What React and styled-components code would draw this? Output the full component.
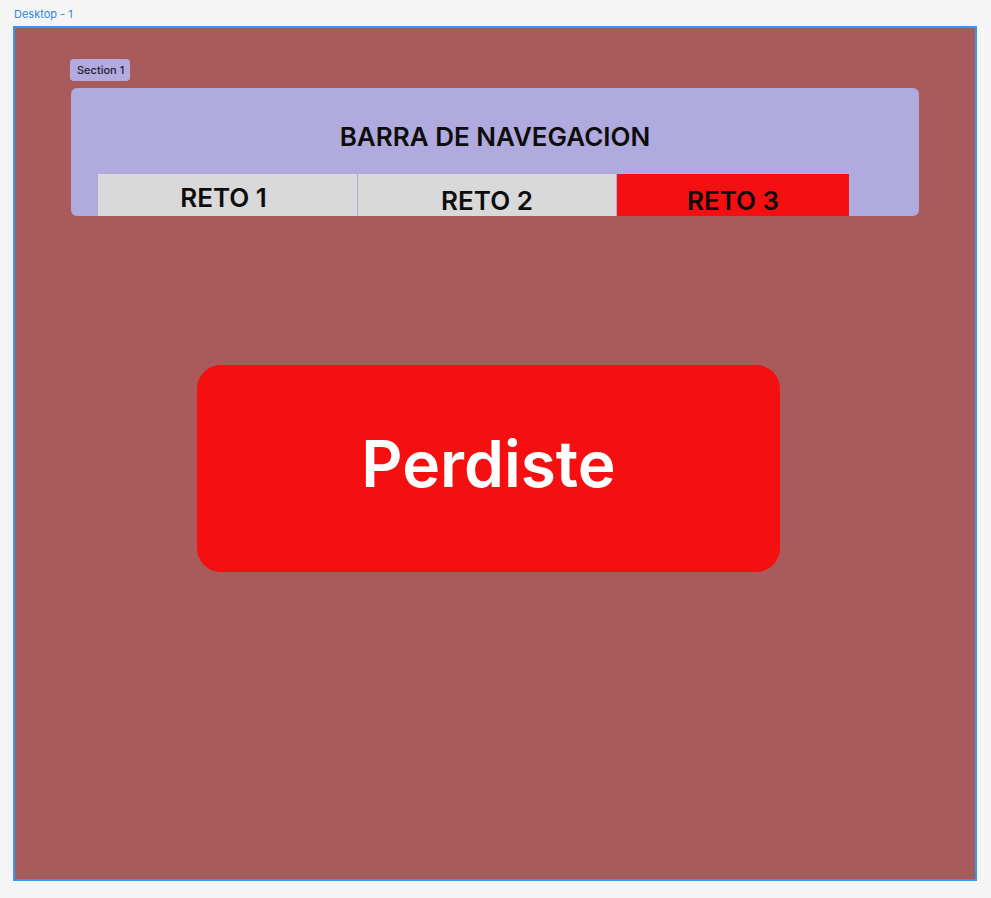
import styled, { createGlobalStyle } from 'styled-components';

const GlobalStyle = createGlobalStyle`
  html, body {
    margin: 0;
    padding: 0;
    background: #f5f5f5;
    font-family: Inter, "Liberation Sans", sans-serif;
  }
  * {
    box-sizing: border-box;
  }
`;

// el primer reto queda un poco mas arriba y a la izquierda en el diseño
const tabs = [
  { label: 'RETO 1', width: 259, active: false, raised: true },
  { label: 'RETO 2', width: 258, active: false },
  { label: 'RETO 3', width: 232, active: true },
];

export default function App() {
  return (
    <Page>
      <GlobalStyle />
      <FrameLabel>Desktop - 1</FrameLabel>
      <Frame>
        <SectionTag>Section 1</SectionTag>
        <NavPanel>
          <NavTitle>BARRA DE NAVEGACION</NavTitle>
          <TabRow>
            {tabs.map((tab) => (
              <Tab key={tab.label} $width={tab.width} $active={tab.active} $raised={tab.raised}>
                {tab.label}
              </Tab>
            ))}
          </TabRow>
        </NavPanel>
        <ResultCard>Perdiste</ResultCard>
      </Frame>
    </Page>
  );
}

const Page = styled.div`
  width: 991px;
  height: 898px;
  padding: 7px 0 0 13px;
  background: #f5f5f5;
`;

const FrameLabel = styled.div`
  font-size: 11px;
  line-height: 14px;
  color: #2f86de;
  padding-left: 1px;
  margin-bottom: 5px;
`;

const Frame = styled.div`
  width: 964px;
  height: 855px;
  border: 2px solid #3399f0;
  background: #a95a5a;
  padding: 30px 0 0 55px;
`;

const SectionTag = styled.div`
  display: inline-flex;
  align-items: center;
  height: 22px;
  padding: 0 6px 0 7px;
  border-radius: 4px;
  background: #b3aae0;
  color: #1e1e2e;
  font-size: 11px;
  font-weight: 500;
`;

const NavPanel = styled.div`
  width: 848px;
  height: 128px;
  margin: 7px 0 0 1px;
  border-radius: 6px;
  background: #b1aade;
  display: flex;
  flex-direction: column;
  overflow: hidden;
`;

const NavTitle = styled.div`
  height: 86px;
  padding-top: 33px;
  text-align: center;
  font-size: 26px;
  font-weight: 600;
  line-height: 31px;
  color: #0d0d0d;
`;

const TabRow = styled.div`
  display: flex;
  gap: 1px;
  padding-left: 27px;
  height: 42px;
`;

const Tab = styled.div`
  width: ${(p) => p.$width}px;
  height: 42px;
  background: ${(p) => (p.$active ? '#f50f10' : '#d9d9d9')};
  color: #0d0d0d;
  font-size: 26px;
  font-weight: 600;
  text-align: center;
  line-height: 31px;
  padding-top: ${(p) => (p.$raised ? 8 : 11)}px;
  padding-right: ${(p) => (p.$raised ? 8 : 0)}px;
`;

const ResultCard = styled.div`
  width: 583px;
  height: 207px;
  margin: 149px 0 0 127px;
  border-radius: 24px;
  background: #f50f10;
  color: #ffffff;
  font-size: 64px;
  font-weight: 600;
  display: flex;
  align-items: center;
  justify-content: center;
  padding-bottom: 10px;
`;
